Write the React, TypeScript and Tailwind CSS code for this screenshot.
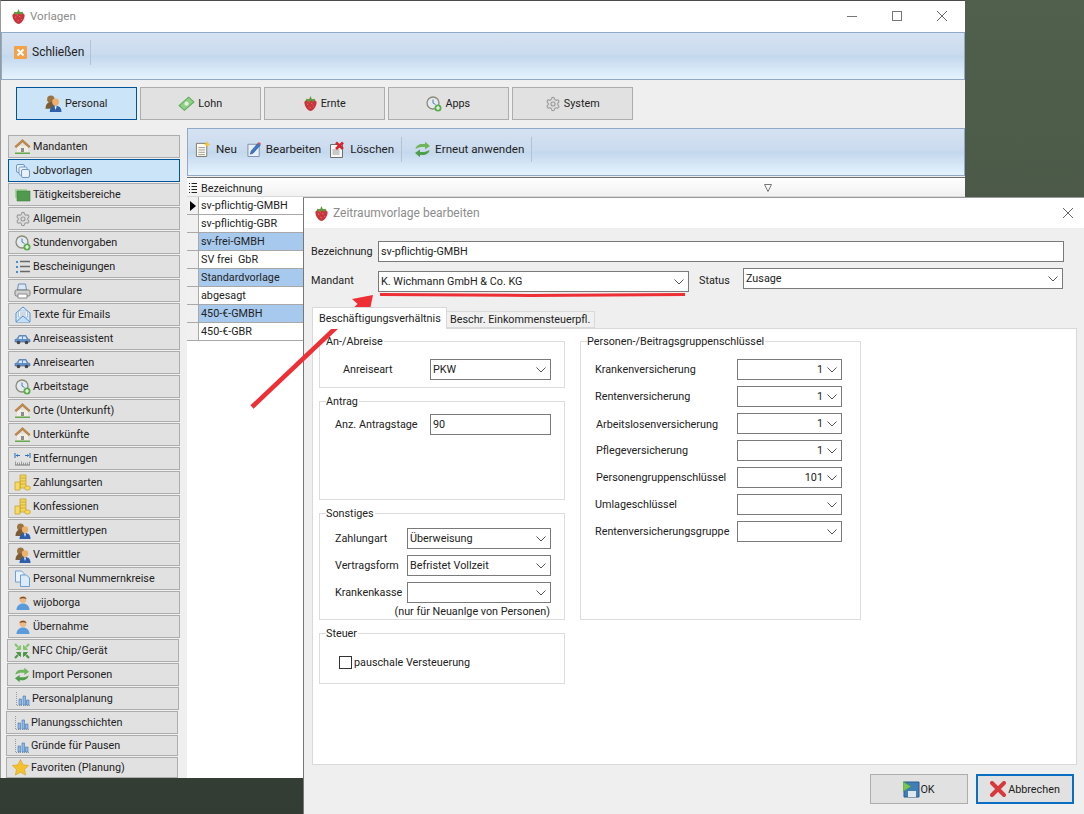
import { ReactNode } from "react";
import { Settings } from "lucide-react";

type Ic = { s?: number };

function Strawberry({ s = 16 }: Ic) {
  return (
    <svg width={s} height={s} viewBox="0 0 16 16">
      <path d="M1.500 7c0-2 2.500-3.500 6.500-3.500S14.500 5 14.500 7c0 4.500-4 9-6.500 9S1.500 11.500 1.500 7z" fill="#c9353c" />
      <path d="M4.500 8.500l1 .5M9 8l1 .5M7 12l1 .5M11 11l.5.5M6 6l1 .5" stroke="#ee9a9a" strokeWidth="1" />
      <path d="M3 3l3.500.5L8 0l1.500 3.500L13 3l-1.500 3L8 5 4.500 6z" fill="#5d9a3c" />
    </svg>
  );
}

function CloseBox() {
  return (
    <svg width="13" height="13" viewBox="0 0 13 13">
      <rect width="13" height="13" rx="1" fill="#f3a24a" />
      <path d="M3.500 3.500l6 6M9.500 3.500l-6 6" stroke="#fff" strokeWidth="2" />
    </svg>
  );
}

function People({ s = 16 }: Ic) {
  return (
    <svg width={s} height={s} viewBox="0 0 16 16">
      <circle cx="5.500" cy="4" r="3.500" fill="#9a7440" />
      <path d="M.5 13c0-4 2-6.500 5-6.500S9 9 9 13z" fill="#7d5c34" />
      <circle cx="10" cy="6.500" r="3.200" fill="#eeb06a" />
      <path d="M4.500 16c0-4 2-6 5.500-6s5.500 2 5.500 6z" fill="#2f5fa8" />
      <path d="M9 10.500h2L10 14z" fill="#fff" />
    </svg>
  );
}

function Money() {
  return (
    <svg width="17" height="17" viewBox="0 0 16 16">
      <path d="M1 10L10 2l5 4.500-9 8z" fill="#8fcf87" stroke="#5fa95a" />
      <circle cx="8" cy="8.200" r="2" fill="#dff3da" />
    </svg>
  );
}

function ClockPlus({ s = 16 }: Ic) {
  return (
    <svg width={s} height={s} viewBox="0 0 16 16">
      <circle cx="7" cy="7" r="6" fill="#e4eaf0" stroke="#8c8a78" strokeWidth="1.300" />
      <path d="M7 3.500V7l2.500 1.500" stroke="#4f79b0" strokeWidth="1" fill="none" />
      <circle cx="12" cy="12" r="3.500" fill="#5cab4e" />
      <path d="M10 12h4M12 10v4" stroke="#fff" strokeWidth="1.200" />
    </svg>
  );
}

function Gear({ s = 16 }: Ic) {
  return <Settings size={s} color="#9a9a9a" fill="#dcdcdc" strokeWidth={1.600} />;
}

function NewDoc() {
  return (
    <svg width="16" height="16" viewBox="0 0 17 17">
      <path d="M1.500 2.500h11v14h-11z" fill="#fdfbf0" stroke="#77776a" />
      <path d="M3.500 7h7M3.500 9.500h7M3.500 12h7M3.500 14.500h7" stroke="#9a9a90" />
      <path d="M13 0l1 2.500 2.500 1-2.500 1-1 2.500-1-2.500-2.500-1 2.500-1z" fill="#f7c42c" />
    </svg>
  );
}

function EditDoc() {
  return (
    <svg width="15" height="16" viewBox="0 0 15 17">
      <path d="M.5 3.500h12v13H.5z" fill="#e8eff8" stroke="#7d8fa6" />
      <path d="M3 14l1-3.500L11 2.500l2.500 2L6 13z" fill="#3d78c4" stroke="#27518c" strokeWidth=".6" />
      <path d="M11 2.500l1-1.500 2.500 2-1 1.500z" fill="#d9534f" />
    </svg>
  );
}

function DeleteDoc() {
  return (
    <svg width="17" height="17" viewBox="0 0 17 17">
      <path d="M1.500 3.500h12v13h-12z" fill="#f7f7f7" stroke="#6f6f6f" />
      <path d="M3.500 9h7M3.500 11h7M3.500 13h7" stroke="#9a9a9a" />
      <path d="M7 1.500l7 6.500M14 1.500L7 8" stroke="#d8232a" strokeWidth="2.600" />
    </svg>
  );
}

function Refresh({ s = 17 }: Ic) {
  return (
    <svg width={s} height={s} viewBox="0 0 17 17">
      <path d="M1.500 8C2 4.500 5 3 8 3h3V.8L16 5l-5 3.500V6H8C6 6 4.500 6.500 1.500 8z" fill="#6fb55c" />
      <path d="M15.500 9C15 12.500 12 14 9 14H6v2.200L1 12l5-3.500V11h3c2 0 3.500-.5 6.500-2z" fill="#4f9e4a" />
    </svg>
  );
}

function House() {
  return (
    <svg width="17" height="17" viewBox="0 0 17 17">
      <path d="M3 8v6h11V8z" fill="#f2ede2" />
      <path d="M7 10h3v4H7z" fill="#8d8d8d" />
      <path d="M.8 8.500L8.500 1.500l7.700 7-1.500 1L8.500 4l-6.200 5.500z" fill="#c88a45" stroke="#9c6a30" strokeWidth=".6" />
      <path d="M1 14.500h15V16H1z" fill="#69a84f" />
    </svg>
  );
}

function Copies() {
  return (
    <svg width="16" height="16" viewBox="0 0 16 16" fill="#e8f0fa" stroke="#6c97c8">
      <rect x="1.500" y="1.500" width="8" height="8" rx="1.500" />
      <rect x="4" y="4" width="8" height="8" rx="1.500" />
      <rect x="6.500" y="6.500" width="8" height="8" rx="1.500" />
    </svg>
  );
}

function GreenStack() {
  return (
    <svg width="17" height="16" viewBox="0 0 17 16">
      <path d="M1 2h12v9H1z" fill="#a8d3a0" />
      <path d="M3 4h13v10H3z" fill="#4f9a4c" stroke="#3e7f3d" strokeWidth=".6" />
    </svg>
  );
}

function ListIcon() {
  return (
    <svg width="16" height="16" viewBox="0 0 16 16">
      <path d="M5 2.500h10M5 7.500h10M5 12.500h10" stroke="#6a6a6a" strokeWidth="1.300" />
      <path d="M1 2h2v2H1zM1 7h2v2H1zM1 12h2v2H1z" fill="#3d8fd6" />
    </svg>
  );
}

function Printer() {
  return (
    <svg width="17" height="16" viewBox="0 0 17 16">
      <path d="M4.500 1h7l1 6h-9z" fill="#dbe7f5" stroke="#6d8db5" />
      <rect x="1" y="7" width="15" height="6" rx="1.500" fill="#cfcfcf" stroke="#7c7c7c" />
      <path d="M4 11h9v4H4z" fill="#fff" stroke="#8a8a8a" />
    </svg>
  );
}

function Mail() {
  return (
    <svg width="16" height="17" viewBox="0 0 16 17">
      <path d="M1 7L8 1l7 6v9H1z" fill="#d6e9fa" stroke="#5c96cc" />
      <path d="M3.500 5h9v6h-9z" fill="#fff" stroke="#8aa9c6" strokeWidth=".7" />
      <path d="M5 7h6M5 9h6" stroke="#7fa0bf" strokeWidth=".8" />
      <path d="M1 16l7-6 7 6" fill="#c5dff6" stroke="#5c96cc" />
    </svg>
  );
}

function Car() {
  return (
    <svg width="17" height="16" viewBox="0 0 17 16">
      <path d="M1 11V8.500L3 8l2-3.500h7L14 8l2 .5V11z" fill="#5e8fc8" stroke="#3f6ba1" strokeWidth=".6" />
      <path d="M5.500 5.500h2.500V8H4.300zM9 5.500h2.500L12.700 8H9z" fill="#d6e6f6" />
      <circle cx="4.500" cy="11.500" r="1.800" fill="#444" />
      <circle cx="12.500" cy="11.500" r="1.800" fill="#444" />
    </svg>
  );
}

function Ruler() {
  return (
    <svg width="17" height="16" viewBox="0 0 17 16">
      <path d="M1 2v5M16 2v5M2 4.500h4M11 4.500h4" stroke="#2f73b8" strokeWidth="1.100" />
      <path d="M2 4.500l2-1.500v3zM15 4.500l-2-1.500v3z" fill="#2f73b8" />
      <path d="M1 14h15" stroke="#777" />
      <path d="M1.500 10.500V14M3.500 11.500V14M5.500 11.500V14M7.500 10.500V14M9.500 11.500V14M11.500 11.500V14M13.500 11.500V14M15.500 10.500V14" stroke="#888" strokeWidth=".8" />
    </svg>
  );
}

function Coins() {
  return (
    <svg width="17" height="17" viewBox="0 0 17 17">
      <path d="M6 1h6v13H6z" fill="#f3d45c" stroke="#c9a22a" strokeWidth=".8" />
      <path d="M6 4h6M6 7h6M6 10h6" stroke="#c9a22a" strokeWidth=".7" />
      <path d="M1 8h5v8H1z" fill="#f5da6a" stroke="#c9a22a" strokeWidth=".8" />
      <ellipse cx="13.500" cy="14" rx="3" ry="2" fill="#f5da6a" stroke="#c9a22a" strokeWidth=".8" />
    </svg>
  );
}

function Pages() {
  return (
    <svg width="17" height="17" viewBox="0 0 17 17" fill="#eaf3fc" stroke="#6f9fd0">
      <path d="M1.500 1h6l2.500 2.500V12h-8.500z" />
      <path d="M6.500 5h6l3 3v8.500h-9z" fill="#dcebfa" />
    </svg>
  );
}

function Person() {
  return (
    <svg width="16" height="16" viewBox="0 0 16 16">
      <circle cx="8" cy="4.500" r="3.500" fill="#eeb98a" />
      <path d="M4.500 4C5 1 11 1 11.500 4 9 3 7 3 4.500 4z" fill="#7a4d2a" />
      <path d="M1.500 15c0-4 3-6.500 6.500-6.500s6.500 2.500 6.500 6.500z" fill="#5b9bdc" />
    </svg>
  );
}

function ArrowsIn() {
  return (
    <svg width="16" height="16" viewBox="0 0 16 16">
      <g fill="#86c46f" stroke="#86c46f">
        <path d="M6.500 6.500V2.500l-4 4z" />
        <path d="M1 1l3 3" strokeWidth="2.200" />
        <path d="M9.500 6.500V2.500l4 4z" />
        <path d="M15 1l-3 3" strokeWidth="2.200" />
      </g>
      <g fill="#4f9748" stroke="#4f9748">
        <path d="M6.500 9.500v4l-4-4z" />
        <path d="M1 15l3-3" strokeWidth="2.200" />
        <path d="M9.500 9.500v4l4-4z" />
        <path d="M15 15l-3-3" strokeWidth="2.200" />
      </g>
    </svg>
  );
}

function Chart() {
  return (
    <svg width="16" height="16" viewBox="0 0 16 16">
      <path d="M2.500 1v13.500H16" stroke="#9a9a9a" strokeDasharray="1 1" fill="none" />
      <path d="M5 8h2.500v6H5zM9 5h2.500v9H9zM12.500 9H15v5h-2.500z" fill="#8db9e6" stroke="#3f74b0" strokeWidth=".6" />
    </svg>
  );
}

function Star() {
  return (
    <svg width="17" height="17" viewBox="0 0 17 17">
      <path d="M8.500.5l2.500 5.300 5.600.7-4.100 3.900 1.100 5.700-5.100-2.800-5.100 2.800 1.100-5.700L.4 6.500 6 5.800z" fill="#f5c22e" stroke="#d69c1a" strokeWidth=".6" />
    </svg>
  );
}

function Floppy() {
  return (
    <svg width="17" height="17" viewBox="0 0 17 17">
      <path d="M1 1h15v15H1z" fill="#3f7fb5" stroke="#2a5a85" />
      <path d="M5 10h8v6H5z" fill="#dfe6ec" />
      <path d="M0 .5l8 5-8 5z" fill="#7ac65a" stroke="#4c9a3c" strokeWidth=".6" />
    </svg>
  );
}

function RedX() {
  return (
    <svg width="16" height="16" viewBox="0 0 16 16">
      <path d="M2 2l12 12M14 2L2 14" stroke="#d8393c" strokeWidth="4" strokeLinecap="round" />
    </svg>
  );
}

function Chevron() {
  return (
    <svg width="10" height="6" viewBox="0 0 10 6" className="shrink-0">
      <path d="M.5.500L5 5 9.500.5" stroke="#555" fill="none" />
    </svg>
  );
}

const sideItems: { label: string; icon: ReactNode; shift?: string; short?: boolean; active?: boolean }[] = [
  { label: "Mandanten", icon: <House /> },
  { label: "Jobvorlagen", icon: <Copies />, active: true },
  { label: "Tätigkeitsbereiche", icon: <GreenStack /> },
  { label: "Allgemein", icon: <Gear /> },
  { label: "Stundenvorgaben", icon: <ClockPlus /> },
  { label: "Bescheinigungen", icon: <ListIcon /> },
  { label: "Formulare", icon: <Printer /> },
  { label: "Texte für Emails", icon: <Mail /> },
  { label: "Anreiseassistent", icon: <Car /> },
  { label: "Anreisearten", icon: <Car /> },
  { label: "Arbeitstage", icon: <ClockPlus /> },
  { label: "Orte (Unterkunft)", icon: <House /> },
  { label: "Unterkünfte", icon: <House /> },
  { label: "Entfernungen", icon: <Ruler /> },
  { label: "Zahlungsarten", icon: <Coins /> },
  { label: "Konfessionen", icon: <Coins /> },
  { label: "Vermittlertypen", icon: <People /> },
  { label: "Vermittler", icon: <People /> },
  { label: "Personal Nummernkreise", icon: <Pages /> },
  { label: "wijoborga", icon: <Person /> },
  { label: "Übernahme", icon: <Person /> },
  { label: "NFC Chip/Gerät", icon: <ArrowsIn />, shift: "-ml-px" },
  { label: "Import Personen", icon: <Refresh s={16} />, shift: "-ml-px" },
  { label: "Personalplanung", icon: <Chart />, shift: "-ml-px" },
  { label: "Planungsschichten", icon: <Chart />, shift: "-ml-[2px]" },
  { label: "Gründe für Pausen", icon: <Chart />, shift: "-ml-[2px]", short: true },
  { label: "Favoriten (Planung)", icon: <Star />, shift: "-ml-[2px]", short: true },
];

const navItems: { label: string; icon: ReactNode; active?: boolean }[] = [
  { label: "Personal", icon: <People s={17} />, active: true },
  { label: "Lohn", icon: <Money /> },
  { label: "Ernte", icon: <Strawberry s={15} /> },
  { label: "Apps", icon: <ClockPlus /> },
  { label: "System", icon: <Gear /> },
];

const rows: { label: string; selected?: boolean; current?: boolean }[] = [
  { label: "sv-pflichtig-GMBH", current: true },
  { label: "sv-pflichtig-GBR" },
  { label: "sv-frei-GMBH", selected: true },
  { label: "SV frei  GbR" },
  { label: "Standardvorlage", selected: true },
  { label: "abgesagt" },
  { label: "450-€-GMBH", selected: true },
  { label: "450-€-GBR" },
];

const keyRows: { label: string; value?: string; cls?: string }[] = [
  { label: "Krankenversicherung", value: "1" },
  { label: "Rentenversicherung", value: "1" },
  { label: "Arbeitslosenversicherung", value: "1", cls: "pl-px pt-[2px]" },
  { label: "Pflegeversicherung", value: "1", cls: "pl-px" },
  { label: "Personengruppenschlüssel", value: "101", cls: "pl-px" },
  { label: "Umlageschlüssel" },
  { label: "Rentenversicherungsgruppe" },
];

const barClass =
  "border border-[#8fa9c7] bg-[linear-gradient(to_bottom,#d5e2f2_0%,#cbdbee_45%,#c4d8ed_50%,#e4f3fe_100%)]";

function Select({ value, cls, right }: { value?: string; cls: string; right?: boolean }) {
  return (
    <div className={`flex h-[21px] shrink-0 items-center border border-[#7a7a7a] bg-white pl-[2px] pr-[4px] ${cls}`}>
      <span className={`min-w-0 flex-1 ${right ? "pr-[4px] text-right" : ""}`}>{value}</span>
      <Chevron />
    </div>
  );
}

function Group({ title, cls, children }: { title: string; cls: string; children?: ReactNode }) {
  return (
    <div className={`border border-[#dcdcdc] ${cls}`}>
      <div className="-mt-[8px] ml-[6px] w-fit bg-white pr-[1px] leading-[15px]">{title}</div>
      {children}
    </div>
  );
}

function MainWindow() {
  return (
    <div className="absolute left-0 top-0 flex h-[778px] w-[965px] flex-col border-l border-t border-l-[#9a9a9a] border-t-[#4a4a4a] bg-[#efefef]">
      <div className="flex h-[31px] shrink-0 items-center bg-white pl-[10px]">
        <Strawberry s={15} />
        <span className="ml-[4px] text-[11.600px] text-[#8c8c8c]">Vorlagen</span>
        <div className="ml-auto flex items-center gap-[35px] pb-px pr-[18px]">
          <div className="h-px w-[10px] bg-[#777]" />
          <div className="h-[10px] w-[10px] border border-[#777]" />
          <svg width="10" height="10" viewBox="0 0 10 10">
            <path d="M0 0l10 10M10 0L0 10" stroke="#666" />
          </svg>
        </div>
      </div>

      <div className={`flex h-[48px] shrink-0 items-center pb-[8px] pl-[12px] ${barClass}`}>
        <CloseBox />
        <span className="ml-[5px] text-[12px]">Schließen</span>
        <div className="ml-[6px] h-[25px] w-px bg-[#b3c3d6]" />
      </div>

      <div className="mt-[7px] flex shrink-0 gap-[3.500px] pl-[15px]">
        {navItems.map((n) => (
          <div
            key={n.label}
            className={`flex h-[33px] w-[120.500px] items-center justify-center gap-[3px] border ${
              n.active ? "border-[#005499] bg-[#cce4f7]" : "border-[#adadad] bg-[#e1e1e1]"
            }`}
          >
            {n.icon}
            <span>{n.label}</span>
          </div>
        ))}
      </div>

      <div className="mt-[8px] flex min-h-0 flex-1">
        <div className="mt-[7px] flex w-[186px] shrink-0 flex-col gap-px pl-[7px]">
          {sideItems.map((item) => (
            <div
              key={item.label}
              className={`flex w-[172px] shrink-0 items-center gap-[2px] border pl-[5px] ${item.shift ?? ""} ${
                item.short ? "h-[21px]" : "h-[23px]"
              } ${item.active ? "border-[#005499] bg-[#cce4f7]" : "border-[#adadad] bg-[#e1e1e1]"}`}
            >
              <span className="flex w-[17px] shrink-0 justify-center">{item.icon}</span>
              <span className="whitespace-nowrap">{item.label}</span>
            </div>
          ))}
        </div>

        <div className="flex min-w-0 flex-1 flex-col">
          <div className={`flex h-[48px] shrink-0 items-center pb-[6px] pl-[7px] text-[11.600px] ${barClass}`}>
            <NewDoc />
            <span className="ml-[5px]">Neu</span>
            <span className="ml-[10px]">
              <EditDoc />
            </span>
            <span className="ml-[4px]">Bearbeiten</span>
            <span className="ml-[8px]">
              <DeleteDoc />
            </span>
            <span className="ml-[4px]">Löschen</span>
            <div className="ml-[7px] h-[25px] w-px bg-[#b3c3d6]" />
            <span className="ml-[12px]">
              <Refresh />
            </span>
            <span className="ml-[4px]">Erneut anwenden</span>
            <div className="ml-[7px] h-[25px] w-px bg-[#b3c3d6]" />
          </div>

          <div className="mt-px min-h-0 flex-1 border-t border-t-[#6e6e6e] bg-white">
            <div className="flex h-[19px] items-center border-b border-b-[#d8d8d8] bg-[linear-gradient(to_bottom,#ffffff,#f1f1f1)] pt-[2px]">
              <div className="flex w-[12px] shrink-0 justify-center">
                <ListIcon2 />
              </div>
              <span className="ml-[2px] w-[563px]">Bezeichnung</span>
              <svg width="8" height="8" viewBox="0 0 8 8">
                <path d="M.5.500h7L4 7.500z" fill="none" stroke="#777" />
              </svg>
            </div>
            {rows.map((r) => (
              <div key={r.label} className="flex h-[18px] border-b border-b-[#a8a8a8]">
                <div className="flex w-[12px] shrink-0 items-center justify-center border-r border-r-[#a8a8a8] bg-[#f0f0f0]">
                  {r.current && (
                    <svg width="6" height="10" viewBox="0 0 6 10">
                      <path d="M0 0l6 5-6 5z" fill="#000" />
                    </svg>
                  )}
                </div>
                <div className={`flex-1 whitespace-pre pl-[2px] leading-[17px] ${r.selected ? "bg-[#a7c9ee]" : ""}`}>
                  {r.label}
                </div>
              </div>
            ))}
          </div>
        </div>
      </div>
    </div>
  );
}

function ListIcon2() {
  return (
    <svg width="8" height="10" viewBox="0 0 8 10">
      <path d="M0 .500h1M0 3.500h1M0 6.500h1M0 9.500h1M2.500 .500H8M2.500 3.500H8M2.500 6.500H8M2.500 9.500H8" stroke="#222" />
    </svg>
  );
}

function Dialog() {
  return (
    <div className="absolute left-[303px] top-[197px] flex h-[617px] w-[781px] flex-col border-l border-t border-l-[#777] border-t-[#999] bg-[#efefef]">
      <div className="flex h-[30px] shrink-0 items-center bg-white pl-[10px]">
        <Strawberry s={15} />
        <span className="ml-[4px] text-[12px] text-[#8c8c8c]">Zeitraumvorlage bearbeiten</span>
        <svg width="10" height="10" viewBox="0 0 10 10" className="ml-auto mr-[11px]">
          <path d="M0 0l10 10M10 0L0 10" stroke="#666" />
        </svg>
      </div>

      <div className="mt-[13px] flex items-center pl-[7px]">
        <span className="w-[67px]">Bezeichnung</span>
        <div className="flex h-[21px] w-[686px] items-center border border-[#7a7a7a] bg-white pl-[2px]">sv-pflichtig-GMBH</div>
      </div>

      <div className="mt-[6px] flex h-[24px] items-start pl-[7px]">
        <span className="mt-[3px] w-[67px] self-start pt-[1px] leading-[17px]">Mandant</span>
        <Select value="K. Wichmann GmbH & Co. KG" cls="mt-[3px] w-[311px]" />
        <span className="ml-[10px] mt-[4px] w-[44px] leading-[17px]">Status</span>
        <Select value="Zusage" cls="w-[320px]" />
      </div>

      <div className="ml-[8px] mt-[15px] flex h-[21px] items-end">
        <div className="z-10 -mb-px flex h-[22px] w-[135px] items-center whitespace-nowrap border border-b-0 border-[#d9d9d9] bg-white pl-[6px]">
          Beschäftigungsverhältnis
        </div>
        <div className="flex h-[17px] w-[148px] items-center whitespace-nowrap border border-l-0 border-[#d9d9d9] bg-[#f0f0f0] pl-[3px]">
          Beschr. Einkommensteuerpfl.
        </div>
      </div>

      <div className="ml-[8px] flex h-[437px] w-[765px] border border-[#d9d9d9] bg-white pl-[6px] pt-[12px]">
        <div className="flex w-[246px] shrink-0 flex-col">
          <Group title="An-/Abreise" cls="h-[47px]">
            <div className="mt-[10px] flex items-center pl-[23px]">
              <span className="w-[87px]">Anreiseart</span>
              <Select value="PKW" cls="w-[121px]" />
            </div>
          </Group>
          <Group title="Antrag" cls="mt-[13px] h-[99px]">
            <div className="mt-[5px] flex items-center pl-[15px]">
              <span className="w-[95px]">Anz. Antragstage</span>
              <div className="flex h-[21px] w-[121px] items-center border border-[#7a7a7a] bg-white pl-[2px]">90</div>
            </div>
          </Group>
          <Group title="Sonstiges" cls="mt-[13px] h-[107px]">
            <div className="mt-[7px] flex flex-col gap-[6px] pl-[15px]">
              <div className="flex items-center">
                <span className="w-[72px]">Zahlungart</span>
                <Select value="Überweisung" cls="w-[144px]" />
              </div>
              <div className="flex items-center">
                <span className="w-[72px]">Vertragsform</span>
                <Select value="Befristet Vollzeit" cls="w-[144px]" />
              </div>
              <div className="flex items-center">
                <span className="w-[72px]">Krankenkasse</span>
                <Select cls="w-[144px]" />
              </div>
            </div>
            <div className="mr-[14px] mt-px text-right leading-[15px]">(nur für Neuanlge von Personen)</div>
          </Group>
          <Group title="Steuer" cls="mt-[13px] h-[51px]">
            <div className="mt-[14px] flex items-center pl-[19px]">
              <div className="h-[13px] w-[13px] border border-[#333] bg-white" />
              <span className="ml-[2px]">pauschale Versteuerung</span>
            </div>
          </Group>
        </div>

        <Group title="Personen-/Beitragsgruppenschlüssel" cls="ml-[15px] h-[279px] w-[281px]">
          <div className="mt-[10px] flex flex-col gap-[6px] pl-[14px]">
            {keyRows.map((k) => (
              <div key={k.label} className="flex items-center">
                <span className={`w-[142px] whitespace-nowrap ${k.cls ?? ""}`}>{k.label}</span>
                <Select value={k.value} cls="w-[105px]" right />
              </div>
            ))}
          </div>
        </Group>
      </div>

      <div className="mt-[9px] flex justify-end gap-[8px] pr-[10px]">
        <div className="flex h-[30px] w-[98px] items-center justify-center border border-[#adadad] bg-[#e1e1e1]">
          <Floppy />
          <span>OK</span>
        </div>
        <div className="flex h-[30px] w-[98px] items-center justify-center gap-[2px] border-2 border-[#0a6fc2] bg-[#e1e1e1]">
          <RedX />
          <span>Abbrechen</span>
        </div>
      </div>
    </div>
  );
}

export default function App() {
  return (
    <div className="relative h-[814px] w-[1084px] overflow-hidden bg-[linear-gradient(to_bottom,#50604c,#4c5948_25%,#333c33_100%)] font-['Roboto',sans-serif] text-[10.800px] leading-[15px] text-[#222]">
      <MainWindow />
      <Dialog />
      {/* arrow and underline are annotations drawn on top of the screenshot */}
      <svg width="1084" height="814" className="pointer-events-none absolute left-0 top-0">
        <path d="M252 407L362 303" stroke="#ee2f35" strokeWidth="4.500" />
        <path d="M373 295L352 299L369 314z" fill="#ee2f35" />
        <path d="M380 294.500L530 295.500L685 294.500" stroke="#ee2f35" strokeWidth="3" fill="none" />
      </svg>
    </div>
  );
}
